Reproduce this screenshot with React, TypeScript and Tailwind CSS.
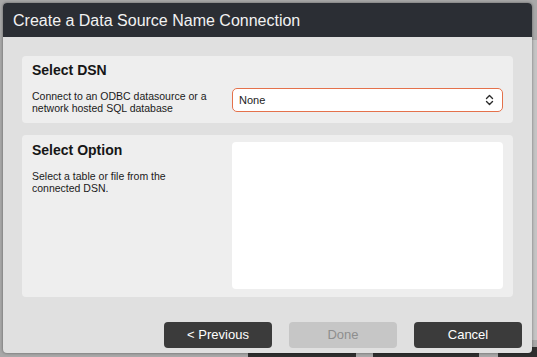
// DSN connection wizard dialog
const Chevrons = () => (
  <svg width="9" height="12" viewBox="0 0 9 12" fill="none" stroke="#2a2a2a" strokeWidth="1.4" strokeLinecap="round" strokeLinejoin="round">
    <path d="M1.5 4.5 L4.5 1.5 L7.5 4.5" />
    <path d="M1.5 7.5 L4.5 10.5 L7.5 7.5" />
  </svg>
);

export default function App() {
  return (
    <div className="relative h-[357px] w-[537px] overflow-hidden bg-[#a8a8a8] pl-[3px] pt-[3px] font-['Liberation_Sans',Arial,sans-serif]">
      {/* bits of the app behind the dialog */}
      <div className="absolute bottom-0 left-[248px] h-[10px] w-[108px] bg-[#2f2f2f]" />
      <div className="absolute bottom-0 left-[373px] h-[10px] w-[106px] bg-[#2f2f2f]" />
      <div className="absolute bottom-0 left-[498px] h-[10px] w-[39px] bg-[#2f2f2f]" />
      <div className="absolute right-0 top-[40px] h-[300px] w-[5px] bg-[#c4c4c4]" />

      <div className="relative flex h-[350px] w-[529px] flex-col overflow-hidden rounded-[4px] bg-[#e0e0e0] shadow-[0_0_3px_rgba(0,0,0,0.45)]">
        <div className="h-[34px] shrink-0 bg-[#2b2e34] pl-[10px] pt-[9px] text-[16px] leading-[18px] text-[#f2f2f2]">
          Create a Data Source Name Connection
        </div>

        <div className="px-[19px] pt-[19px]">
          <section className="rounded-[4px] bg-[#eeeeee] pb-[11px] pl-[10px] pr-[10px] pt-[6px]">
            <h2 className="text-[14px] font-bold leading-[16px] text-[#161616]">Select DSN</h2>
            <div className="mt-[10px] flex h-[24px] items-start">
              <p className="mt-[2px] w-[200px] pr-[20px] text-[10.5px] leading-[12px] text-[#1a1a1a]">
                Connect to an ODBC datasource or a network hosted SQL database
              </p>
              <div className="flex h-[24px] w-[271px] items-center justify-between rounded-[5px] border-[1.5px] border-[#e4714b] bg-white pl-[6px] pr-[8px]">
                <span className="text-[11px] text-[#222]">None</span>
                <Chevrons />
              </div>
            </div>
          </section>

          <section className="mt-[12px] flex rounded-[4px] bg-[#eeeeee] pb-[8px] pl-[10px] pr-[10px] pt-[7px]">
            <div className="w-[200px] pr-[20px]">
              <h2 className="text-[14px] font-bold leading-[16px] text-[#161616]">Select Option</h2>
              <p className="mt-[12px] text-[10.5px] leading-[12px] text-[#1a1a1a]">
                Select a table or file from the connected DSN.
              </p>
            </div>
            <div className="h-[147px] w-[271px] rounded-[4px] bg-white" />
          </section>
        </div>

        <div className="mt-[25px] flex justify-end gap-[17px] pr-[10px]">
          <button className="h-[26px] w-[108px] rounded-[4px] bg-[#3b3b3b] text-[13px] text-white">&lt; Previous</button>
          <button disabled className="h-[26px] w-[108px] rounded-[4px] bg-[#c6c6c6] text-[13px] text-[#8e8e8e]">Done</button>
          <button className="h-[26px] w-[108px] rounded-[4px] bg-[#3b3b3b] text-[13px] text-white">Cancel</button>
        </div>
      </div>
    </div>
  );
}
